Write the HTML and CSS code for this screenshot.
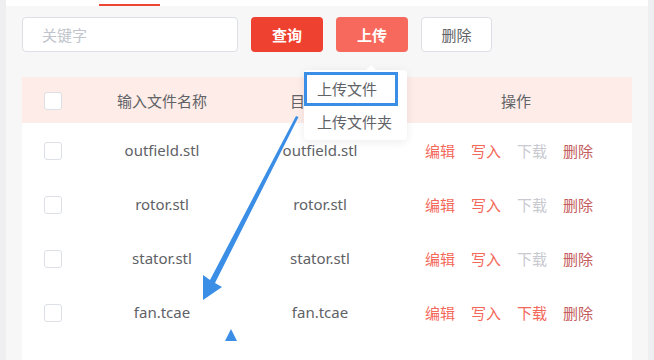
FILE: index.html
```html
<!DOCTYPE html>
<html lang="zh-CN">
<head>
<meta charset="UTF-8">
<title>文件管理</title>
<link rel="stylesheet" href="styles.css">
</head>
<body>
<div class="app">
	<aside class="side"></aside>
	<main class="main">
		<div class="tabs"><span class="tab-line"></span></div>
		<div class="content">
			<div class="toolbar">
				<input class="search" type="text" placeholder="关键字">
				<button class="btn btn-red">查询</button>
				<div class="upload">
					<button class="btn btn-light">上传</button>
					<div class="popover">
						<div class="pop-item pop-mark">上传文件</div>
						<div class="pop-item">上传文件夹</div>
					</div>
				</div>
				<button class="btn btn-plain">删除</button>
			</div>
			<div class="table-box">
				<table class="grid">
					<colgroup>
						<col style="width: 62px">
						<col style="width: 156px">
						<col style="width: 160px">
						<col>
					</colgroup>
					<thead>
						<tr>
							<th><span class="check"></span></th>
							<th>输入文件名称</th>
							<th class="hidden-head">目标文件</th>
							<th>操作</th>
						</tr>
					</thead>
					<tbody>
						<tr>
							<td><span class="check"></span></td>
							<td>outfield.stl</td>
							<td>outfield.stl</td>
							<td class="ops"><a class="op">编辑</a><a class="op">写入</a><a class="op off">下载</a><a class="op del">删除</a></td>
						</tr>
						<tr>
							<td><span class="check"></span></td>
							<td>rotor.stl</td>
							<td>rotor.stl</td>
							<td class="ops"><a class="op">编辑</a><a class="op">写入</a><a class="op off">下载</a><a class="op del">删除</a></td>
						</tr>
						<tr>
							<td><span class="check"></span></td>
							<td>stator.stl</td>
							<td>stator.stl</td>
							<td class="ops"><a class="op">编辑</a><a class="op">写入</a><a class="op off">下载</a><a class="op del">删除</a></td>
						</tr>
						<tr>
							<td><span class="check"></span></td>
							<td>fan.tcae</td>
							<td>fan.tcae</td>
							<td class="ops"><a class="op">编辑</a><a class="op">写入</a><a class="op">下载</a><a class="op del">删除</a></td>
						</tr>
					</tbody>
				</table>
			</div>
		</div>
	</main>
	<div class="edge"></div>
</div>
<!-- 标注箭头 -->
<svg class="mark" width="654" height="360" viewBox="0 0 654 360">
	<polygon points="296,116 298.5,117 215,283 222,287 203,300 203,275 210,280" fill="#3a8ee6"/>
	<polygon points="225,341 237,341 231,329" fill="#3a8ee6"/>
</svg>
</body>
</html>
```

FILE: styles.css
```css
body {
	margin: 0;
	font-family: "Noto Sans", "Noto Sans CJK SC", sans-serif;
	color: #606266;
	overflow: hidden;
}
.app {
	display: flex;
	width: 654px;
	height: 360px;
	background: #f7f7f8;
}
.side,
.edge {
	width: 6px;
	flex: none;
	background: #efeff1;
}
.main {
	flex: 1;
	min-width: 0;
	display: flex;
	flex-direction: column;
}
.tabs {
	height: 6px;
	flex: none;
	background: #fff;
	padding-left: 93px;
	display: flex;
	align-items: flex-end;
}
.tab-line {
	width: 61px;
	height: 2px;
	background: #ef4536;
}
.content {
	flex: 1;
	display: flex;
	flex-direction: column;
	padding: 11px 16px 0;
}
.toolbar {
	display: flex;
	gap: 13px;
	height: 35px;
	flex: none;
}
.search {
	width: 216px;
	height: 35px;
	box-sizing: border-box;
	border: 1px solid #dcdfe6;
	border-radius: 4px;
	padding: 0 19px;
	font: 15px "Noto Sans", "Noto Sans CJK SC", sans-serif;
	color: #606266;
	background: #fff;
	outline: none;
}
.search::placeholder {
	color: #c0c4cc;
}
.btn {
	width: 72px;
	height: 35px;
	border: 0;
	border-radius: 4px;
	font: 600 15px "Noto Sans", "Noto Sans CJK SC", sans-serif;
	color: #fff;
	padding: 0;
}
.btn-red {
	background: #ef4130;
}
.btn-light {
	background: #f6695c;
}
.btn-plain {
	width: 71px;
	background: #fff;
	border: 1px solid #dcdfe6;
	color: #606266;
	font-weight: 400;
}
.upload {
	position: relative;
}
.popover {
	position: absolute;
	left: -32px;
	top: 53px;
	width: 103px;
	padding: 2px 0;
	background: #fff;
	border-radius: 4px;
	box-shadow: 0 2px 10px rgba(0, 0, 0, .08);
	z-index: 2;
}
.popover::before {
	content: "";
	position: absolute;
	left: 62px;
	top: -5px;
	border: 5px solid transparent;
	border-top: 0;
	border-bottom-color: #fff;
}
.pop-item {
	height: 32px;
	line-height: 32px;
	padding-left: 13px;
	font-size: 15px;
	color: #606266;
	white-space: nowrap;
}
.pop-mark {
	width: 94px;
	height: 34px;
	line-height: 28px;
	box-sizing: border-box;
	padding-left: 10px;
	border: 3px solid #3a8ee6;
}
.table-box {
	flex: 1;
	margin-top: 25px;
	background: #fff;
}
.grid {
	width: 610px;
	border-collapse: collapse;
	table-layout: fixed;
	font-size: 15px;
}
.grid th {
	height: 46px;
	padding: 0;
	background: #feece8;
	font-weight: 400;
	color: #606266;
	text-align: center;
}
/* 被弹出层盖住，只露出第一个字 */
.grid th.hidden-head {
	text-align: left;
	padding-left: 50px;
	white-space: nowrap;
	overflow: hidden;
}
.grid td {
	height: 54px;
	padding: 0;
	text-align: center;
	color: #606266;
}
.check {
	display: inline-block;
	width: 18px;
	height: 18px;
	box-sizing: border-box;
	border: 1px solid #dcdfe6;
	border-radius: 3px;
	background: #fff;
	vertical-align: middle;
}
.grid td.ops {
	text-align: left;
	padding-left: 25px;
}
.op {
	display: inline-block;
	margin-right: 16px;
	color: #f4685a;
}
.op.off {
	color: #c8cad0;
}
.op.del {
	color: #c45d5d;
	margin-right: 0;
}
.mark {
	position: absolute;
	left: 0;
	top: 0;
	pointer-events: none;
	z-index: 3;
}
```
